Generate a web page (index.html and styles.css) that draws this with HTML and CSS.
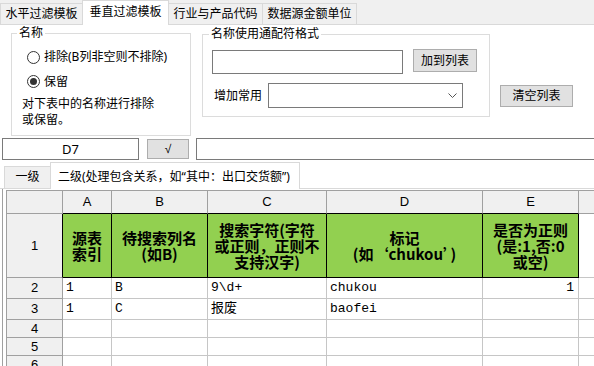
FILE: index.html
```html
<!DOCTYPE html>
<html lang="zh-CN">
<head>
<meta charset="utf-8">
<title>垂直过滤模板</title>
<link rel="stylesheet" href="styles.css">
</head>
<body>
<div class="tabs">
  <div class="tab t1">水平过滤模板</div>
  <div class="tab t2 active">垂直过滤模板</div>
  <div class="tab t3">行业与产品代码</div>
  <div class="tab t4">数据源金额单位</div>
</div>
<div class="panel">
  <fieldset class="group g1">
    <legend>名称</legend>
    <div class="g1-body">
      <div class="radio"><span class="dot"></span><span>排除(B列非空则不排除)</span></div>
      <div class="radio r2"><span class="dot on"></span><span>保留</span></div>
      <p class="note">对下表中的名称进行排除<br>或保留。</p>
    </div>
  </fieldset>
  <fieldset class="group g2">
    <legend>名称使用通配符格式</legend>
    <div class="g2-body">
      <div class="row1"><div class="input"></div><div class="btn add">加到列表</div></div>
      <div class="row2"><span class="lbl">增加常用</span><div class="select"><svg class="chev" width="9" height="5" viewBox="0 0 9 5"><polyline points="0.5,0.5 4.5,4.5 8.5,0.5" fill="none" stroke="#555" stroke-width="1"/></svg></div></div>
    </div>
  </fieldset>
  <div class="btn clear">清空列表</div>
</div>
<div class="fbar">
  <div class="namebox">D7</div>
  <div class="btn check">√</div>
  <div class="formula"></div>
</div>
<div class="subtabs">
  <div class="stab s1">一级</div>
  <div class="stab s2 active">二级(处理包含关系，如“其中：出口交货额”)</div>
</div>
<div class="sheet">
  <table>
    <colgroup>
      <col class="c0"><col class="ca"><col class="cb"><col class="cc"><col class="cd"><col class="ce"><col class="cf">
    </colgroup>
    <tr class="hrow">
      <td class="hd"></td><td class="hd hk">A</td><td class="hd hk">B</td><td class="hd hk">C</td><td class="hd hk">D</td><td class="hd hk">E</td><td class="hd"></td>
    </tr>
    <tr class="r1">
      <td class="rh rk">1</td>
      <td class="g">源表<br>索引</td>
      <td class="g">待搜索列名<br>(如B)</td>
      <td class="g">搜索字符(字符<br>或正则，正则不<br>支持汉字)</td>
      <td class="g">标记<br>(如‘chukou’)</td>
      <td class="g">是否为正则<br>(是:1,否:0<br>或空)</td>
      <td class="d"></td>
    </tr>
    <tr class="r2">
      <td class="rh">2</td><td class="d">1</td><td class="d">B</td><td class="d">9\d+</td><td class="d">chukou</td><td class="d num">1</td><td class="d"></td>
    </tr>
    <tr class="r3">
      <td class="rh">3</td><td class="d">1</td><td class="d">C</td><td class="d">报废</td><td class="d">baofei</td><td class="d"></td><td class="d"></td>
    </tr>
    <tr class="rs">
      <td class="rh">4</td><td class="d"></td><td class="d"></td><td class="d"></td><td class="d"></td><td class="d"></td><td class="d"></td>
    </tr>
    <tr class="rs">
      <td class="rh">5</td><td class="d"></td><td class="d"></td><td class="d"></td><td class="d"></td><td class="d"></td><td class="d"></td>
    </tr>
    <tr class="rs">
      <td class="rh">6</td><td class="d"></td><td class="d"></td><td class="d"></td><td class="d"></td><td class="d"></td><td class="d"></td>
    </tr>
  </table>
</div>
</body>
</html>
```
FILE: styles.css
```css
* { box-sizing: border-box; }
html, body { margin: 0; padding: 0; }
body {
  width: 594px;
  height: 366px;
  overflow: hidden;
  background: #fff;
  color: #000;
  font-family: "Noto Sans", "Noto Sans CJK SC", sans-serif;
  font-size: 12px;
  line-height: 16px;
}

/* top tabs */
.tabs {
  height: 25px;
  background: #f0f0f0;
  border-bottom: 1px solid #d9d9d9;
  display: flex;
  align-items: flex-end;
}
.tab {
  height: 21px;
  border: 1px solid #d9d9d9;
  border-bottom: none;
  background: #f0f0f0;
  text-align: center;
  line-height: 19px;
  white-space: nowrap;
  margin-left: -1px;
}
.t1 { width: 83px; margin-left: 0; }
.t2 { width: 87px; }
.t3 { width: 95px; }
.t4 { width: 95px; }
.tab.active {
  height: 25px;
  margin-bottom: -1px;
  background: #fff;
  line-height: 22px;
  z-index: 1;
}

/* panel */
.panel {
  height: 113px;
  display: flex;
  align-items: flex-start;
  padding-left: 11px;
}
.group {
  margin: 0;
  padding: 0;
  min-width: 0;
  border: 1px solid #dcdcdc;
}
.group legend {
  padding: 0 2px;
  line-height: 16px;
}
.g1 { width: 180px; }
.g1 legend { margin-left: 5px; }
.g1-body { padding: 6px 0 7px 10px; }
.radio {
  display: flex;
  align-items: center;
  gap: 4px;
  height: 20px;
  margin-left: 5px;
  white-space: nowrap;
}
.radio.r2 { margin-top: 4px; }
.dot {
  width: 13px;
  height: 13px;
  border: 1px solid #333;
  border-radius: 50%;
  background: #fff;
  display: grid;
  place-items: center;
  flex: none;
}
.dot.on::after {
  content: "";
  width: 7px;
  height: 7px;
  border-radius: 50%;
  background: #333;
}
.note { margin: 4px 0 0; line-height: 16px; }

.g2 { width: 288px; margin-left: 11px; margin-top: 1px; }
.g2 legend { margin-left: 6px; }
.g2-body { padding: 8px 0 8px 9px; }
.row1 { display: flex; align-items: flex-start; }
.input {
  width: 191px;
  height: 24px;
  border: 1px solid #7a7a7a;
  background: #fff;
}
.btn {
  background: #e1e1e1;
  border: 1px solid #adadad;
  text-align: center;
  white-space: nowrap;
}
.add {
  width: 64px;
  height: 23px;
  margin-left: 10px;
  margin-top: -1px;
  line-height: 21px;
}
.row2 { display: flex; align-items: center; margin-top: 9px; }
.lbl { width: 48px; margin-left: 2px; white-space: nowrap; }
.select {
  width: 195px;
  height: 25px;
  margin-left: 6px;
  border: 1px solid #7a7a7a;
  background: #fff;
  display: flex;
  align-items: center;
  justify-content: flex-end;
  padding-right: 5px;
}
.chev { display: block; }
.clear {
  width: 73px;
  height: 22px;
  margin-left: 10px;
  margin-top: 60px;
  line-height: 20px;
}

/* formula bar */
.fbar { display: flex; height: 22px; }
.namebox {
  width: 137px;
  height: 22px;
  margin-left: 2px;
  border: 1px solid #7a7a7a;
  text-align: center;
  font-size: 13px;
  line-height: 20px;
}
.check {
  width: 42px;
  height: 20px;
  margin-left: 8px;
  margin-top: 1px;
  line-height: 18px;
  font-family: "Liberation Sans", sans-serif;
  font-size: 12px;
}
.formula {
  flex: 1;
  height: 22px;
  margin-left: 7px;
  border: 1px solid #7a7a7a;
  border-right: none;
}

/* sub tabs */
.subtabs {
  margin-top: 2px;
  height: 27px;
  border-bottom: 1px solid #d9d9d9;
  display: flex;
  align-items: flex-end;
}
.stab {
  border: 1px solid #d9d9d9;
  border-bottom: none;
  white-space: nowrap;
}
.s1 {
  width: 47px;
  height: 22px;
  margin-left: 4px;
  background: #f0f0f0;
  text-align: center;
  line-height: 20px;
}
.s2 {
  width: 250px;
  height: 27px;
  margin-left: -1px;
  margin-bottom: -1px;
  background: #fff;
  padding: 4px 0 0 7px;
  line-height: 20px;
}

/* sheet */
.sheet {
  margin-left: 2px;
  border-left: 1px solid #a0a0a0;
  padding: 1px 0 0 3px;
  height: 200px;
  overflow: hidden;
}
table {
  border-collapse: separate;
  border-spacing: 0;
  table-layout: fixed;
  width: 633px;
  border-top: 1px solid #a0a0a0;
  border-left: 1px solid #a0a0a0;
}
.c0 { width: 56px; }
.ca { width: 49px; }
.cb { width: 96px; }
.cc { width: 119px; }
.cd { width: 156px; }
.ce { width: 96px; }
.cf { width: 60px; }
td {
  padding: 0 3px;
  border-right: 1px solid #c6c6c6;
  border-bottom: 1px solid #c6c6c6;
  overflow: hidden;
  white-space: nowrap;
  vertical-align: middle;
}
.hrow { height: 23px; }
.r1 { height: 64px; }
.r2, .r3 { height: 21px; }
.rs { height: 18px; }
.hd {
  background: #f0f0f0;
  border-right-color: #a0a0a0;
  border-bottom-color: #a0a0a0;
  text-align: center;
  font-family: "Liberation Sans", sans-serif;
  font-size: 13px;
}
.hd.hk { border-bottom-color: #000; }
.rh {
  background: #f0f0f0;
  border-right-color: #a0a0a0;
  border-bottom-color: #a0a0a0;
  text-align: center;
  font-family: "Liberation Sans", sans-serif;
  font-size: 13px;
}
.rh.rk { border-right-color: #000; }
.g {
  background: #92d050;
  border-right-color: #000;
  border-bottom-color: #000;
  text-align: center;
  font-family: "Noto Sans CJK SC", sans-serif;
  font-weight: 700;
  font-size: 15px;
  line-height: 16px;
  overflow: visible;
}
.d {
  font-family: "Liberation Mono", "Noto Sans CJK SC", monospace;
  font-size: 13px;
}
.num { text-align: right; padding-right: 4px; }
```
